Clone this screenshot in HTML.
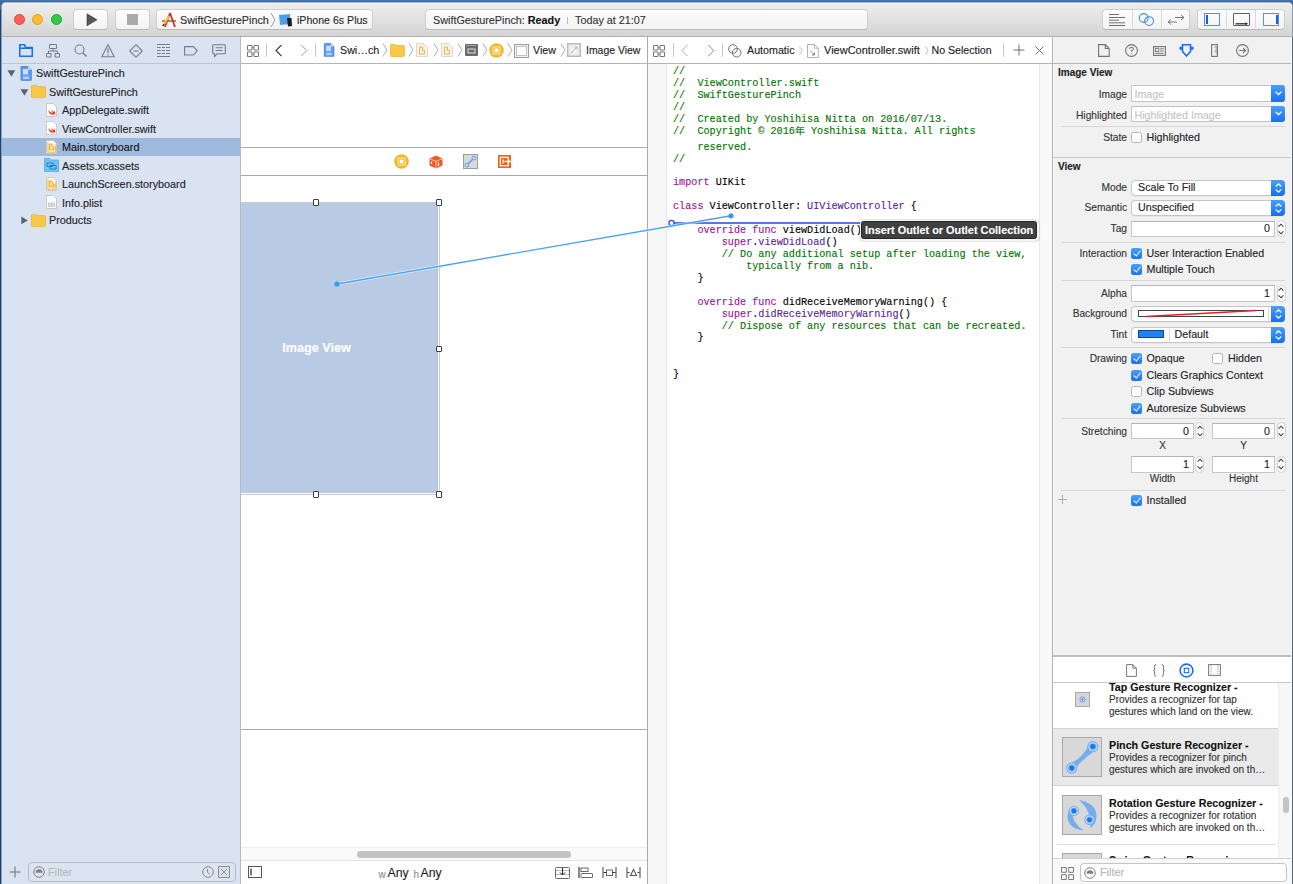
<!DOCTYPE html>
<html><head><meta charset="utf-8">
<style>
*{box-sizing:border-box;margin:0;padding:0}
html,body{width:1293px;height:884px;overflow:hidden;background:#15457f;font-family:"Liberation Sans",sans-serif;font-size:11px;color:#222;position:relative}
.a{position:absolute}
svg{position:absolute;overflow:visible}
#desk{position:absolute;left:0;top:0;width:1293px;height:10px;background:linear-gradient(#4b79af,#3f6aa0 1.5px,#3f6aa0 2px)}
#win{position:absolute;left:1px;top:2px;width:1292px;height:882px;background:#fff;border:1px solid #8e9bb0;border-top-color:#aebbcc;border-bottom:0;border-radius:5px 5px 0 0}
#tb{position:absolute;left:2px;top:3px;width:1290px;height:34px;background:linear-gradient(#eeeeee,#d4d4d4);border-bottom:1px solid #b0b0b0;border-radius:4px 4px 0 0;box-shadow:inset 0 1px 0 #f4f4f3}
.tl{position:absolute;top:14.2px;width:11px;height:11px;border-radius:50%}
.btn{position:absolute;top:9px;height:21px;background:linear-gradient(#fefefe,#f3f3f3);border:1px solid #cfcfcf;border-bottom-color:#b8b8b8;border-radius:4px}
.sep{position:absolute;top:0;width:1px;height:18px;background:#dadada}
.t{position:absolute;white-space:nowrap;line-height:13px}
#nav{position:absolute;left:2px;top:37px;width:239px;height:847px;background:#d9e3f2;border-right:1px solid #b6bac2}
#canvas{position:absolute;left:241px;top:37px;width:407px;height:847px;background:#fff;border-right:1px solid #a9a9a9}
#code{position:absolute;left:648px;top:37px;width:405px;height:847px;background:#fff;border-right:1px solid #b0b0b0}
#insp{position:absolute;left:1053px;top:37px;width:239px;height:847px;background:#f1f1f1;border-left:1px solid #f8f8f8}
.mono{font-family:"Liberation Mono",monospace;font-size:10.17px;line-height:12px}

.cb{position:absolute;width:11px;height:11px;border:1px solid #b3b3b3;border-radius:2.5px;background:#fff}
.cbc{position:absolute;width:11px;height:11px;border-radius:2.5px;background:linear-gradient(#4aa1fb,#1b70f4)}
.cbc:after{content:"";position:absolute;left:3.5px;top:1px;width:3px;height:6.2px;border:solid #fff;border-width:0 1.8px 1.8px 0;transform:rotate(38deg)}
.pop{position:absolute;left:1131px;width:154px;height:16px;background:#fff;border:1px solid #c6c6c6;border-radius:4px;box-shadow:0 0.5px 0.5px rgba(0,0,0,.08)}
.pb{position:absolute;right:-1px;top:-1px;width:14px;height:16px;background:linear-gradient(#49a1fb,#176cf3);border-radius:0 4px 4px 0}
.pb svg{left:3.5px;top:3px}
.tf{position:absolute;left:1131px;height:16.5px;background:#fff;border:1px solid #c6c6c6;border-top-color:#b4b4b4}
.st{position:absolute;width:9px;height:17px;border:1px solid #cfcfcf;border-radius:4.5px;background:#fff}
.lbl{position:absolute;left:1053px;width:74px;text-align:right;font-size:10.2px;color:#333;white-space:nowrap;line-height:13px}
.val{position:absolute;font-size:10.7px;color:#222;white-space:nowrap;line-height:13px}
.hd{position:absolute;width:6.5px;height:6.5px;background:#fff;border:1px solid #3c3c3c;border-radius:1px}
.t,.val,.lbl{-webkit-text-stroke:0.12px currentColor}
.mono{-webkit-text-stroke:0.12px currentColor}
.hr{position:absolute;left:1061px;width:224px;height:1px;background:#d6d6d6}
</style></head><body>
<div id="desk"></div>
<div id="win"></div>

<div id="tb"></div>
<div class="tl" style="left:13.7px;background:#fd5f57;border:1px solid #e0443e"></div>
<div class="tl" style="left:32.1px;background:#fdbc2e;border:1px solid #dea123"></div>
<div class="tl" style="left:50.5px;background:#34c84a;border:1px solid #1aab29"></div>
<div class="btn" style="left:73px;width:35px"></div>
<svg style="left:85.5px;top:13px" width="12" height="14"><path d="M1 0.8 L11 6.8 L1 12.8Z" fill="#575757" stroke="#333" stroke-width="0.6"/></svg>
<div class="btn" style="left:114.5px;width:35px"></div>
<div class="a" style="left:127px;top:14px;width:11px;height:11px;background:#aaaaaa"></div>
<div class="btn" style="left:156px;width:217px"></div>
<svg style="left:160px;top:12px" width="18" height="16" viewBox="0 0 18 16">
 <path d="M2 9 L16 9" stroke="#a26a3a" stroke-width="1.6"/>
 <path d="M10 1 L5 15" stroke="#c8303a" stroke-width="1.8"/>
 <path d="M10 1 L15 15" stroke="#c8303a" stroke-width="1.8"/>
 <path d="M3 14 L9 4" stroke="#e7c63a" stroke-width="2.2"/>
 <path d="M3 14 L4 12" stroke="#333" stroke-width="1.5"/>
</svg>
<div class="t" style="left:180px;top:13.5px;font-size:10.8px;color:#2a2a2a">SwiftGesturePinch</div>
<svg style="left:270px;top:12px" width="6" height="16"><path d="M1 1 L5 8 L1 15" fill="none" stroke="#9a9a9a" stroke-width="1"/></svg>
<svg style="left:278px;top:13px" width="15" height="14" viewBox="0 0 15 14">
 <path d="M1 2 L12 1 L12 11 L2 12 Z" fill="#4aa0ee"/>
 <path d="M9 5 L13.5 5 L14 13 L10 13.5 Z" fill="#1a1a1a"/>
</svg>
<div class="t" style="left:297px;top:13.5px;font-size:10.6px;color:#2a2a2a">iPhone 6s Plus</div>
<div class="btn" style="left:425px;width:443px;background:linear-gradient(#fbfbfb,#f4f4f4)"></div>
<div class="t" style="left:433px;top:13.5px;font-size:10.8px;color:#333">SwiftGesturePinch: <b style="color:#111">Ready</b></div>
<div class="a" style="left:567px;top:16.5px;width:1px;height:7.5px;background:#bcbcbc"></div>
<div class="t" style="left:575px;top:13.5px;font-size:10.8px;color:#333">Today at 21:07</div>
<div class="btn" style="left:1102px;width:88px"><div class="sep" style="left:29px"></div><div class="sep" style="left:58px"></div></div>
<svg style="left:1108px;top:14px" width="18" height="12">
 <path d="M1 0.5H11M1 3.5H17M1 6.2H11M1 8.8H17M1 11.5H17" stroke="#6e6e6e" stroke-width="1"/>
</svg>
<svg style="left:1138px;top:12px" width="16" height="16">
 <circle cx="5.7" cy="6" r="4.4" fill="none" stroke="#3f8cf4" stroke-width="1.1"/>
 <circle cx="11.1" cy="9.1" r="4.4" fill="none" stroke="#3f8cf4" stroke-width="1.1"/>
</svg>
<svg style="left:1166px;top:13px" width="20" height="14">
 <path d="M9 4.5H18M15 2L18 4.5L15 7" fill="none" stroke="#737373" stroke-width="1"/>
 <path d="M2 9H11M5 6.5L2 9L5 11.5" fill="none" stroke="#737373" stroke-width="1"/>
</svg>
<div class="btn" style="left:1197px;width:88px"><div class="sep" style="left:28px"></div><div class="sep" style="left:57px"></div></div>
<div class="a" style="left:1204px;top:13px;width:16px;height:13px;border:1px solid #4d90f7"></div>
<div class="a" style="left:1206px;top:15px;width:1.5px;height:9px;background:#0f62f0"></div>
<div class="a" style="left:1233px;top:13px;width:17px;height:13px;border:1px solid #5f5f5f;border-radius:1px"></div>
<svg style="left:1235px;top:21.5px" width="14" height="4"><path d="M0.5 1.8H11.5" stroke="#1e1e1e" stroke-width="1.2"/><path d="M10.5 0.3L13 1.8L10.5 3.3Z" fill="#1e1e1e"/></svg>
<div class="a" style="left:1263px;top:13px;width:16px;height:13px;border:1px solid #4d90f7"></div>
<div class="a" style="left:1276px;top:15px;width:1.5px;height:9px;background:#0f62f0"></div>
<div id="nav"></div>
<div class="a" style="left:2px;top:63px;width:238px;height:1px;background:#bfc5ce"></div>
<!-- nav tab icons -->
<svg style="left:19px;top:44px" width="14" height="13"><path d="M0.75 2.5V12.25H13.25V3.5H6.5L5.5 0.75H0.75Z M0.75 4.25H13.25" fill="none" stroke="#1a6ef5" stroke-width="1.5"/></svg>
<svg style="left:46px;top:44px" width="14" height="14"><path d="M3.5 0.5H10.5V4.5H3.5Z M7 4.5V7 M2.5 7H11.5V9 M2.5 7V9 M11.5 7V9 M0.5 9.5H5V13H0.5Z M9 9.5H13.5V13H9Z" fill="none" stroke="#787d84" stroke-width="1"/></svg>
<svg style="left:74px;top:44px" width="14" height="14"><circle cx="5.5" cy="5.5" r="4.5" fill="none" stroke="#787d84" stroke-width="1.1"/><path d="M8.8 8.8L12.5 12.5" stroke="#787d84" stroke-width="1.4"/></svg>
<svg style="left:101px;top:44px" width="14" height="14"><path d="M7 0.8L13.2 12.8H0.8Z" fill="none" stroke="#787d84" stroke-width="1.1"/><path d="M7 4.5V9M7 10.2V11.4" stroke="#787d84" stroke-width="1.2"/></svg>
<svg style="left:129px;top:44px" width="14" height="14"><path d="M7 0.7L13.3 7L7 13.3L0.7 7Z M4.3 7H9.7" fill="none" stroke="#787d84" stroke-width="1.1"/></svg>
<svg style="left:157px;top:44px" width="13" height="13"><path d="M0 0.5H13M0 3.5H13M0 6.5H13M0 9.5H13M0 12.5H13" stroke="#787d84" stroke-width="1"/><path d="M4.2 3V10M8.5 3V10" stroke="#dbe4f1" stroke-width="1"/></svg>
<svg style="left:184px;top:46px" width="14" height="10"><path d="M0.6 0.6H9.5L13.2 4.8L9.5 9H0.6Z" fill="none" stroke="#787d84" stroke-width="1.1"/></svg>
<svg style="left:212px;top:44px" width="14" height="14"><path d="M1.5 0.7H12.5Q13.3 0.7 13.3 1.5V9Q13.3 9.8 12.5 9.8H5L2.5 12.5V9.8H1.5Q0.7 9.8 0.7 9V1.5Q0.7 0.7 1.5 0.7Z M3.5 3.7H10.5M3.5 6.5H10.5" fill="none" stroke="#787d84" stroke-width="1.1"/></svg>

<!-- tree -->
<div class="a" style="left:2px;top:138px;width:238px;height:18px;background:#9fb8dd"></div>
<svg style="left:7px;top:70px" width="9" height="7"><path d="M0.5 0.3H8.3L4.4 6.8Z" fill="#5b6370"/></svg>
<svg style="left:20px;top:66px" width="12" height="15" viewBox="0 0 12 15"><path d="M1 0.5H8L11.3 3.8V14.3H1Z" fill="#5a9cf3" stroke="#3b7de0" stroke-width="0.8"/><path d="M8 0.5V3.8H11.3" fill="#cfe2fb"/><path d="M3 3H8V8.5H3Z" fill="#eaf3ff" opacity=".8"/><path d="M3 11H9M3 12.5H9" stroke="#eaf3ff" stroke-width="0.8"/></svg>
<div class="t" style="left:36px;top:67px;font-size:10.8px">SwiftGesturePinch</div>

<svg style="left:20px;top:88.5px" width="9" height="7"><path d="M0.5 0.3H8.3L4.4 6.8Z" fill="#5b6370"/></svg>
<svg style="left:31px;top:85px" width="15" height="13"><path d="M0.5 1.2Q0.5 0.4 1.3 0.4H5.5L6.5 1.6H13.7Q14.5 1.6 14.5 2.4V11.8Q14.5 12.6 13.7 12.6H1.3Q0.5 12.6 0.5 11.8Z" fill="#f8c947" stroke="#e7b22c" stroke-width="0.7"/></svg>
<div class="t" style="left:49px;top:85.5px;font-size:10.8px">SwiftGesturePinch</div>
<svg style="left:46px;top:102.5px" width="11" height="14"><path d="M0.5 0.5H7.3L10.5 3.7V13.5H0.5Z" fill="#fff" stroke="#bfbfbf" stroke-width="0.8"/><path d="M2.2 7.2Q4.5 10 7 10.2Q6 8.5 4.5 6.8Q7 8.5 8.3 8.9Q8.4 7.5 7.6 6.4Q9.3 7.8 9.2 10.2Q9.5 11 9 12Q8.6 11.2 7.6 11.3Q5.8 12.3 3.8 10.8Q2.6 9.5 2.2 7.2Z" fill="#f23b22"/></svg>
<div class="t" style="left:62px;top:104px;font-size:10.8px">AppDelegate.swift</div>
<svg style="left:46px;top:121px" width="11" height="14"><path d="M0.5 0.5H7.3L10.5 3.7V13.5H0.5Z" fill="#fff" stroke="#bfbfbf" stroke-width="0.8"/><path d="M2.2 7.2Q4.5 10 7 10.2Q6 8.5 4.5 6.8Q7 8.5 8.3 8.9Q8.4 7.5 7.6 6.4Q9.3 7.8 9.2 10.2Q9.5 11 9 12Q8.6 11.2 7.6 11.3Q5.8 12.3 3.8 10.8Q2.6 9.5 2.2 7.2Z" fill="#f23b22"/></svg>
<div class="t" style="left:62px;top:122.5px;font-size:10.8px">ViewController.swift</div>
<svg style="left:46px;top:139.5px" width="11" height="14"><path d="M0.5 0.5H7.3L10.5 3.7V13.5H0.5Z" fill="#fffaf0" stroke="#c9c3b8" stroke-width="0.8"/><path d="M2 2V12.3H9.2V4.5" fill="none" stroke="#f0b93e" stroke-width="1.1"/><path d="M3.5 4H6.2V7.2H8V10H3.5Z" fill="#fbe3a6" stroke="#e6a12a" stroke-width="0.9"/></svg>
<div class="t" style="left:62px;top:141px;font-size:10.8px;color:#111">Main.storyboard</div>
<svg style="left:44px;top:158px" width="15" height="14"><path d="M0.5 0.5H5.5L6.5 2H14.5V13.5H0.5Z" fill="#6cc3f2" stroke="#49a8df" stroke-width="0.7"/><path d="M3 5H9V8.5H3Z M6 7.5H12V11H6Z" fill="none" stroke="#1f78c2" stroke-width="0.9"/></svg>
<div class="t" style="left:62px;top:159.5px;font-size:10.8px">Assets.xcassets</div>
<svg style="left:46px;top:176.5px" width="11" height="14"><path d="M0.5 0.5H7.3L10.5 3.7V13.5H0.5Z" fill="#fffaf0" stroke="#c9c3b8" stroke-width="0.8"/><path d="M2 2V12.3H9.2V4.5" fill="none" stroke="#f0b93e" stroke-width="1.1"/><path d="M3.5 4H6.2V7.2H8V10H3.5Z" fill="#fbe3a6" stroke="#e6a12a" stroke-width="0.9"/></svg>
<div class="t" style="left:62px;top:178px;font-size:10.8px">LaunchScreen.storyboard</div>
<svg style="left:46px;top:195px" width="11" height="14"><path d="M0.5 0.5H7.3L10.5 3.7V13.5H0.5Z" fill="#fafafa" stroke="#bfbfbf" stroke-width="0.8"/><path d="M2.5 8H8.5V11.5H2.5Z M2.5 9.7H8.5 M5.5 8V11.5" fill="none" stroke="#b5b5b5" stroke-width="0.7"/></svg>
<div class="t" style="left:62px;top:196.5px;font-size:10.8px">Info.plist</div>
<svg style="left:21px;top:216px" width="7" height="9"><path d="M0.3 0.5V8.3L6.8 4.4Z" fill="#5b6370"/></svg>
<svg style="left:31px;top:213.5px" width="15" height="13"><path d="M0.5 1.2Q0.5 0.4 1.3 0.4H5.5L6.5 1.6H13.7Q14.5 1.6 14.5 2.4V11.8Q14.5 12.6 13.7 12.6H1.3Q0.5 12.6 0.5 11.8Z" fill="#f8c947" stroke="#e7b22c" stroke-width="0.7"/></svg>
<div class="t" style="left:49px;top:214px;font-size:10.8px">Products</div>

<!-- nav filter bar -->
<svg style="left:9px;top:866px" width="12" height="12"><path d="M6 0.5V11.5M0.5 6H11.5" stroke="#707070" stroke-width="1"/></svg>
<div class="a" style="left:28px;top:862px;width:208px;height:20px;border:1px solid #b8bcc2;border-radius:4px;background:#dbe4f1"></div>
<svg style="left:33px;top:866px" width="12" height="12"><circle cx="6" cy="6" r="5.3" fill="none" stroke="#808080" stroke-width="1"/><path d="M2.5 6.8A3.5 3.5 0 0 1 9.5 6.8Z" fill="#808080"/></svg>
<div class="t" style="left:48px;top:865.5px;font-size:10.8px;color:#b8b8b8">Filter</div>
<svg style="left:202px;top:866px" width="12" height="12"><circle cx="6" cy="6" r="5.3" fill="none" stroke="#8a8a8a" stroke-width="1"/><path d="M5.5 2.8V6.3L7.8 8.3" fill="none" stroke="#8a8a8a" stroke-width="1"/></svg>
<svg style="left:218px;top:866px" width="12" height="12"><path d="M0.5 0.5H11.5V11.5H0.5Z M3 3L9 9M9 3L3 9" fill="none" stroke="#8a8a8a" stroke-width="1"/></svg>
<div id="canvas"></div>
<div class="a" style="left:241px;top:63px;width:406px;height:1px;background:#b5b5b5"></div>
<!-- jump bar -->
<svg style="left:247px;top:44.5px" width="12" height="12"><path d="M0.5 0.5H5V5H0.5Z M7 0.5H11.5V5H7Z M0.5 7H5V11.5H0.5Z M7 7H11.5V11.5H7Z" fill="none" stroke="#777" stroke-width="1"/><path d="M5 2.7H7M5 9.2H7" stroke="#777" stroke-width="0.8"/></svg>
<div class="a" style="left:266px;top:43px;width:1px;height:14px;background:#c8c8c8"></div>
<svg style="left:275px;top:44px" width="8" height="13"><path d="M6.5 0.8L1 6.5L6.5 12.2" fill="none" stroke="#333" stroke-width="1.1"/></svg>
<svg style="left:300px;top:44px" width="8" height="13"><path d="M1.2 0.8L6.7 6.5L1.2 12.2" fill="none" stroke="#a0a0a0" stroke-width="1"/></svg>
<div class="a" style="left:315px;top:43px;width:1px;height:14px;background:#c8c8c8"></div>
<svg style="left:323px;top:43px" width="12" height="14" viewBox="0 0 12 15"><path d="M1 0.5H8L11.3 3.8V14.3H1Z" fill="#5a9cf3" stroke="#3b7de0" stroke-width="0.8"/><path d="M8 0.5V3.8H11.3" fill="#cfe2fb"/><path d="M3 3H8V8.5H3Z" fill="#eaf3ff" opacity=".8"/><path d="M3 11H9M3 12.5H9" stroke="#eaf3ff" stroke-width="0.8"/></svg>
<div class="t" style="left:340px;top:43.5px;font-size:10.7px;color:#222">Swi…ch</div>
<svg style="left:382px;top:43px" width="6" height="14"><path d="M1 0.5L5 7L1 13.5" fill="none" stroke="#a5a5a5" stroke-width="0.9"/></svg>
<svg style="left:389.5px;top:44px" width="15" height="13"><path d="M0.5 1.2Q0.5 0.4 1.3 0.4H5.5L6.5 1.6H13.7Q14.5 1.6 14.5 2.4V11.8Q14.5 12.6 13.7 12.6H1.3Q0.5 12.6 0.5 11.8Z" fill="#f8c947" stroke="#e7b22c" stroke-width="0.7"/></svg>
<svg style="left:407.5px;top:43px" width="6" height="14"><path d="M1 0.5L5 7L1 13.5" fill="none" stroke="#a5a5a5" stroke-width="0.9"/></svg>
<svg style="left:416px;top:43px" width="12" height="14"><path d="M0.5 0.5H8L11.5 4V13.5H0.5Z" fill="#f8f3ea" stroke="#d8d0c2" stroke-width="0.8"/><path d="M3.5 4H6.5V7.5H8.5V11H3.5Z" fill="none" stroke="#eab04c" stroke-width="1"/></svg>
<svg style="left:432.5px;top:43px" width="6" height="14"><path d="M1 0.5L5 7L1 13.5" fill="none" stroke="#a5a5a5" stroke-width="0.9"/></svg>
<svg style="left:441px;top:43px" width="12" height="14"><path d="M0.5 0.5H8L11.5 4V13.5H0.5Z" fill="#f8f3ea" stroke="#d8d0c2" stroke-width="0.8"/><path d="M3.5 4H6.5V7.5H8.5V11H3.5Z" fill="none" stroke="#eab04c" stroke-width="1"/></svg>
<svg style="left:457px;top:43px" width="6" height="14"><path d="M1 0.5L5 7L1 13.5" fill="none" stroke="#a5a5a5" stroke-width="0.9"/></svg>
<svg style="left:465px;top:44px" width="13" height="12"><rect x="0" y="0" width="13" height="12" rx="1" fill="#6b6b6b"/><path d="M1.5 1.5H11.5" stroke="#ddd" stroke-width="1" stroke-dasharray="1 1"/><rect x="3" y="5" width="7" height="4" fill="none" stroke="#e0e0e0" stroke-width="1"/></svg>
<svg style="left:481.5px;top:43px" width="6" height="14"><path d="M1 0.5L5 7L1 13.5" fill="none" stroke="#a5a5a5" stroke-width="0.9"/></svg>
<svg style="left:489px;top:43px" width="15" height="15"><circle cx="7.5" cy="7.5" r="7.3" fill="#f1b82d"/><rect x="4" y="4" width="7" height="7" fill="none" stroke="#fbe3a0" stroke-width="1.2"/><rect x="5.6" y="5.6" width="3.8" height="3.8" fill="#fff"/></svg>
<svg style="left:507px;top:43px" width="6" height="14"><path d="M1 0.5L5 7L1 13.5" fill="none" stroke="#a5a5a5" stroke-width="0.9"/></svg>
<svg style="left:514px;top:43.5px" width="15" height="14"><rect x="0.5" y="0.5" width="14" height="13" fill="#efefef" stroke="#9d9d9d" stroke-width="1"/><rect x="2.5" y="2.5" width="10" height="9" fill="#fff" stroke="#b5b5b5" stroke-width="0.8"/></svg>
<div class="t" style="left:533px;top:43.5px;font-size:10.7px;color:#222">View</div>
<svg style="left:560px;top:43px" width="6" height="14"><path d="M1 0.5L5 7L1 13.5" fill="none" stroke="#a5a5a5" stroke-width="0.9"/></svg>
<svg style="left:567px;top:43px" width="14" height="14"><rect x="0.75" y="0.75" width="12.5" height="12.5" fill="#f4f4f4" stroke="#b9b9b9" stroke-width="1.5"/><path d="M4 10L9.5 4.5M7.5 4H10V6.5" fill="none" stroke="#a0a0a0" stroke-width="0.8"/><path d="M3 3H11V11H3Z" fill="none" stroke="#dedede" stroke-width="0.6"/></svg>
<div class="t" style="left:586px;top:43.5px;font-size:10.45px;color:#222">Image View</div>

<!-- scene dock -->
<div class="a" style="left:241px;top:147px;width:406px;height:1px;background:#a9a9a9"></div>
<div class="a" style="left:241px;top:175px;width:406px;height:1px;background:#a9a9a9"></div>
<svg style="left:394px;top:154px" width="15" height="15"><circle cx="7.5" cy="7.5" r="7.3" fill="#f1b82d"/><rect x="4" y="4" width="7" height="7" fill="none" stroke="#fbe3a0" stroke-width="1.2"/><rect x="5.6" y="5.6" width="3.8" height="3.8" fill="#fff"/></svg>
<svg style="left:428.5px;top:154.5px" width="14" height="14"><path d="M7 0.5L13.5 3.5V10.5L7 13.5L0.5 10.5V3.5Z" fill="#f05a28"/><path d="M0.5 3.5L7 6.5L13.5 3.5M7 6.5V13.5" fill="none" stroke="#ffd7c4" stroke-width="0.9"/><path d="M2.5 6.5V9M9.5 7.5V11" stroke="#fff" stroke-width="1.2"/></svg>
<svg style="left:462.5px;top:154px" width="15" height="15"><rect x="0.5" y="0.5" width="14" height="14" fill="#d9d9d9" stroke="#9e9e9e" stroke-width="1"/><circle cx="4" cy="11" r="2" fill="none" stroke="#5c9ef0" stroke-width="1"/><circle cx="11" cy="4" r="2" fill="none" stroke="#5c9ef0" stroke-width="1"/><path d="M5.3 9.7L9.7 5.3" stroke="#5c9ef0" stroke-width="1.4"/></svg>
<svg style="left:497.5px;top:155px" width="13" height="13"><rect x="0" y="0" width="13" height="13" fill="#f2611f"/><rect x="2.3" y="2.3" width="8" height="8.4" fill="none" stroke="#fff" stroke-width="1.3"/><path d="M5 4.5V8.5M6.5 6.5H12.5" stroke="#fff" stroke-width="1.3"/><path d="M10.5 4.5L12.5 6.5L10.5 8.5" fill="#fff"/></svg>

<!-- image view -->
<div class="a" style="left:241px;top:202px;width:199px;height:293px;border:1px solid #cbcbcb;border-left:0;background:#fff"></div>
<div class="a" style="left:241px;top:203px;width:197px;height:290px;background:#b9cbe4;border-right:1px solid #adc3e3"></div>
<div class="t" style="left:241px;top:341.5px;width:151px;text-align:center;font-size:12.6px;font-weight:bold;color:#fff">Image View</div>
<div class="hd" style="left:312.8px;top:199.3px"></div>
<div class="hd" style="left:435.8px;top:199.3px"></div>
<div class="hd" style="left:435.8px;top:345.8px"></div>
<div class="hd" style="left:312.8px;top:491.3px"></div>
<div class="hd" style="left:435.8px;top:491.3px"></div>

<div class="a" style="left:241px;top:729px;width:406px;height:1px;background:#a9a9a9"></div>
<!-- scrollbar -->
<div class="a" style="left:241px;top:847px;width:406px;height:14px;background:#fafafa;border-top:1px solid #ececec"></div>
<div class="a" style="left:357px;top:851px;width:214px;height:7px;border-radius:4px;background:#c2c2c2"></div>
<div class="a" style="left:241px;top:860px;width:406px;height:1px;background:#e2e2e2"></div>
<div class="a" style="left:241px;top:861px;width:406px;height:23px;background:#fff"></div>
<svg style="left:248px;top:866px" width="14" height="12"><rect x="0.5" y="0.5" width="13" height="11" fill="none" stroke="#555" stroke-width="1"/><path d="M3 2.5V9.5" stroke="#222" stroke-width="1.2"/></svg>
<div class="t" style="left:378.5px;top:868px;font-size:10px;color:#8e8e8e">w</div>
<div class="t" style="left:387.5px;top:866.5px;font-size:12.3px;color:#1e1e1e">Any</div>
<div class="t" style="left:413.5px;top:868px;font-size:10px;color:#8e8e8e">h</div>
<div class="t" style="left:420.5px;top:866.5px;font-size:12.3px;color:#1e1e1e">Any</div>
<svg style="left:554.5px;top:866.5px" width="15" height="12"><rect x="0.5" y="0.5" width="14" height="11" rx="1" fill="none" stroke="#6a6a6a" stroke-width="1"/><path d="M0.5 3.5H14.5M0.5 7.5H14.5" stroke="#6a6a6a" stroke-width="0.8" stroke-dasharray="1.2 0.8"/><path d="M7.5 1V7.5M5 5.5L7.5 8L10 5.5" fill="none" stroke="#222" stroke-width="1"/></svg>
<svg style="left:578px;top:867px" width="15" height="11"><path d="M1 0V11" stroke="#8a8a8a" stroke-width="2"/><rect x="3" y="1" width="7" height="3.5" fill="none" stroke="#6a6a6a" stroke-width="1"/><rect x="3" y="6.5" width="11.5" height="4" rx="0.5" fill="none" stroke="#6a6a6a" stroke-width="1"/></svg>
<svg style="left:602px;top:867px" width="15" height="11"><path d="M1 0V11M14 0V11" stroke="#8a8a8a" stroke-width="1.6"/><rect x="4.5" y="3" width="6" height="5.5" fill="none" stroke="#6a6a6a" stroke-width="1"/><path d="M1.5 5.5H4.5M10.5 5.5H13.5" stroke="#222" stroke-width="0.9"/></svg>
<svg style="left:626px;top:867px" width="15" height="11"><path d="M1 0V11M14 0V11" stroke="#8a8a8a" stroke-width="1.6"/><path d="M7.5 2.5L10.5 8.5H4.5Z" fill="none" stroke="#555" stroke-width="1.1"/><path d="M1.5 5.5H3.5M11.5 5.5H13.5" stroke="#222" stroke-width="0.9"/></svg>
<div id="code"></div>
<div class="a" style="left:648px;top:63px;width:404px;height:1px;background:#b5b5b5"></div>
<div class="a" style="left:648px;top:64px;width:19px;height:820px;background:#f6f6f6;border-right:1px solid #e9e9e9"></div>
<div class="a" style="left:1039px;top:64px;width:13px;height:820px;background:#f9f9f9;border-left:1px solid #e8e8e8"></div>
<!-- jump bar -->
<svg style="left:653px;top:44.5px" width="12" height="12"><path d="M0.5 0.5H5V5H0.5Z M7 0.5H11.5V5H7Z M0.5 7H5V11.5H0.5Z M7 7H11.5V11.5H7Z" fill="none" stroke="#777" stroke-width="1"/><path d="M5 2.7H7M5 9.2H7" stroke="#777" stroke-width="0.8"/></svg>
<div class="a" style="left:673px;top:43px;width:1px;height:14px;background:#c8c8c8"></div>
<svg style="left:681px;top:44px" width="8" height="13"><path d="M6.5 0.8L1 6.5L6.5 12.2" fill="none" stroke="#a8a8a8" stroke-width="1"/></svg>
<svg style="left:707px;top:44px" width="8" height="13"><path d="M1.2 0.8L6.7 6.5L1.2 12.2" fill="none" stroke="#8a8a8a" stroke-width="1"/></svg>
<div class="a" style="left:721.5px;top:43px;width:1px;height:14px;background:#c8c8c8"></div>
<svg style="left:728px;top:43.5px" width="14" height="14"><circle cx="5" cy="5" r="4.3" fill="none" stroke="#707070" stroke-width="1"/><circle cx="8.7" cy="8.7" r="4.3" fill="none" stroke="#707070" stroke-width="1"/></svg>
<div class="t" style="left:747px;top:43.5px;font-size:10.7px;color:#222">Automatic</div>
<svg style="left:799px;top:46px" width="4" height="9"><path d="M0.5 0.5L3.2 4.5L0.5 8.5" fill="none" stroke="#aaa" stroke-width="0.8"/></svg>
<svg style="left:807px;top:43.5px" width="12" height="14"><path d="M0.5 0.5H7.5L11.3 4.3V13.5H0.5Z" fill="#fff" stroke="#a9a9a9" stroke-width="0.9"/><path d="M7.5 0.5V4.3H11.3" fill="none" stroke="#a9a9a9" stroke-width="0.8"/><path d="M3.5 7L7.5 11M7.5 8.5V11H5" fill="none" stroke="#777" stroke-width="0.9"/></svg>
<div class="t" style="left:824px;top:43.5px;font-size:11px;color:#222">ViewController.swift</div>
<svg style="left:924.5px;top:46px" width="4" height="9"><path d="M0.5 0.5L3.2 4.5L0.5 8.5" fill="none" stroke="#aaa" stroke-width="0.8"/></svg>
<div class="t" style="left:931.5px;top:43.5px;font-size:10.6px;color:#222">No Selection</div>
<div class="a" style="left:1003px;top:43px;width:1px;height:14px;background:#c8c8c8"></div>
<svg style="left:1013px;top:44px" width="12" height="12"><path d="M6 0.5V11.5M0.5 6H11.5" stroke="#6d6d6d" stroke-width="1"/></svg>
<svg style="left:1034.5px;top:45.5px" width="9" height="9"><path d="M0.5 0.5L8.5 8.5M8.5 0.5L0.5 8.5" stroke="#6d6d6d" stroke-width="1"/></svg>
<!-- code -->
<div class="mono" style="position:absolute;left:673px;top:0;white-space:pre;color:#000"><div class="a" style="top:65.5px"><span style="color:#007400">//</span></div>
<div class="a" style="top:77.5px"><span style="color:#007400">//  ViewController.swift</span></div>
<div class="a" style="top:89.5px"><span style="color:#007400">//  SwiftGesturePinch</span></div>
<div class="a" style="top:101.5px"><span style="color:#007400">//</span></div>
<div class="a" style="top:113.5px"><span style="color:#007400">//  Created by Yoshihisa Nitta on 2016/07/13.</span></div>
<div class="a" style="top:125.5px"><span style="color:#007400">//  Copyright © 2016年 Yoshihisa Nitta. All rights</span></div>
<div class="a" style="top:141.5px"><span style="color:#007400">    reserved.</span></div>
<div class="a" style="top:153.5px"><span style="color:#007400">//</span></div>
<div class="a" style="top:177.0px"><span style="color:#aa0d91">import</span> UIKit</div>
<div class="a" style="top:200.5px"><span style="color:#aa0d91">class</span> ViewController: <span style="color:#5c2699">UIViewController</span> {</div>
<div class="a" style="top:225.0px">    <span style="color:#aa0d91">override func</span> viewDidLoad() {</div>
<div class="a" style="top:237.0px">        <span style="color:#aa0d91">super</span>.<span style="color:#5c2699">viewDidLoad</span>()</div>
<div class="a" style="top:249.0px"><span style="color:#007400">        // Do any additional setup after loading the view,</span></div>
<div class="a" style="top:261.0px"><span style="color:#007400">            typically from a nib.</span></div>
<div class="a" style="top:272.5px">    }</div>
<div class="a" style="top:296.5px">    <span style="color:#aa0d91">override func</span> didReceiveMemoryWarning() {</div>
<div class="a" style="top:308.5px">        <span style="color:#aa0d91">super</span>.<span style="color:#5c2699">didReceiveMemoryWarning</span>()</div>
<div class="a" style="top:320.5px"><span style="color:#007400">        // Dispose of any resources that can be recreated.</span></div>
<div class="a" style="top:332.0px">    }</div>
<div class="a" style="top:368.5px">}</div>
</div>
<!-- connection -->
<svg style="left:0;top:0" width="1293" height="884">
 <path d="M671.5 223H861" stroke="#1e4ed8" stroke-width="1.6"/>
 <circle cx="671.5" cy="223" r="2.6" fill="#fff" stroke="#1e4ed8" stroke-width="1.3"/>
 <path d="M337 284L731 215.8" stroke="#ffffff" stroke-width="3" opacity="0.6"/>
 <path d="M337 284L731 215.8" stroke="#4aa2f7" stroke-width="1.4"/>
 <circle cx="337" cy="284" r="2.6" fill="#3a98f5"/>
 <circle cx="731" cy="215.8" r="2.6" fill="#3a98f5"/>
</svg>
<div class="a" style="left:859.5px;top:219.5px;width:179px;height:21px;border-radius:4px;background:#f4f4f4;box-shadow:0 0 1.5px rgba(0,0,0,.45)"></div>
<div class="a" style="left:861px;top:221px;width:176px;height:18px;border-radius:2.5px;background:#404040;border:1px solid #262626"></div>
<div class="t" style="left:865px;top:224px;font-size:10.9px;font-weight:bold;color:#fff">Insert Outlet or Outlet Collection</div>
<div id="insp"></div>
<div class="a" style="left:1291px;top:37px;width:1px;height:847px;background:#f8f8f6"></div>
<div class="a" style="left:1292px;top:37px;width:1px;height:847px;background:#56637d"></div>
<div class="a" style="left:1053px;top:63px;width:238px;height:1px;background:#b5b5b5"></div>
<!-- tabs -->
<svg style="left:1098px;top:44px" width="12" height="13"><path d="M0.6 0.6H7.3L11.2 4.5V12.4H0.6Z M7.3 0.6V4.5H11.2" fill="none" stroke="#737373" stroke-width="1.1"/></svg>
<svg style="left:1124.5px;top:44px" width="13" height="13"><circle cx="6.5" cy="6.5" r="5.9" fill="none" stroke="#737373" stroke-width="1.1"/><path d="M4.6 5Q4.6 3.2 6.5 3.2Q8.4 3.2 8.4 4.9Q8.4 6 6.5 6.8V7.8" fill="none" stroke="#737373" stroke-width="1.1"/><circle cx="6.5" cy="9.6" r="0.7" fill="#737373"/></svg>
<svg style="left:1152.5px;top:45.5px" width="13" height="10"><rect x="0.6" y="0.6" width="11.8" height="8.8" fill="none" stroke="#737373" stroke-width="1.1"/><rect x="2.5" y="2.3" width="3.3" height="3.3" fill="none" stroke="#737373" stroke-width="0.9"/><path d="M7 2.8H10.8M7 5H10.8M2.3 7.4H10.8" stroke="#737373" stroke-width="0.9"/></svg>
<svg style="left:1179px;top:43.5px" width="15" height="13"><path d="M3.5 0.8H11.5V7.5L7.5 12L3.5 7.5Z" fill="none" stroke="#1a6ef5" stroke-width="1.6"/><path d="M0.5 4.3H3.5M11.5 4.3H14.5" stroke="#1a6ef5" stroke-width="3"/></svg>
<svg style="left:1210.5px;top:44px" width="7" height="13"><rect x="0.6" y="0.6" width="5.8" height="11.8" fill="none" stroke="#737373" stroke-width="1.1"/><path d="M3.5 3H6M4.5 5H6M3.5 7H6M4.5 9H6" stroke="#737373" stroke-width="0.8"/></svg>
<svg style="left:1235.5px;top:44px" width="13" height="13"><circle cx="6.5" cy="6.5" r="5.9" fill="none" stroke="#737373" stroke-width="1.1"/><path d="M3.2 6.5H9.6M7 3.9L9.6 6.5L7 9.1" fill="none" stroke="#737373" stroke-width="1.1"/></svg>

<!-- section Image View -->
<div class="t" style="left:1058px;top:66px;font-size:10px;font-weight:bold;color:#222">Image View</div>
<div class="t" style="left:1053px;top:88px;width:74px;text-align:right;font-size:10.2px;color:#333">Image</div>
<div class="a" style="left:1131px;top:85px;width:154px;height:16.5px;background:#fff;border:1px solid #c3c3c3;border-right:0;border-radius:2px 3px 3px 2px"></div>
<div class="a" style="left:1271px;top:85px;width:14px;height:16.5px;background:linear-gradient(#48a0fb,#1a6ef4);border-radius:0 3px 3px 0"></div>
<svg style="left:1274.5px;top:90.5px" width="7" height="5"><path d="M0.7 0.7L3.5 3.6L6.3 0.7" fill="none" stroke="#fff" stroke-width="1.3"/></svg>
<div class="t" style="left:1134.5px;top:88px;font-size:10.7px;color:#c4c4c4">Image</div>
<div class="t" style="left:1053px;top:108.5px;width:74px;text-align:right;font-size:10.2px;color:#333">Highlighted</div>
<div class="a" style="left:1131px;top:105.5px;width:154px;height:16.5px;background:#fff;border:1px solid #c3c3c3;border-right:0;border-radius:2px 3px 3px 2px"></div>
<div class="a" style="left:1271px;top:105.5px;width:14px;height:16.5px;background:linear-gradient(#48a0fb,#1a6ef4);border-radius:0 3px 3px 0"></div>
<svg style="left:1274.5px;top:111px" width="7" height="5"><path d="M0.7 0.7L3.5 3.6L6.3 0.7" fill="none" stroke="#fff" stroke-width="1.3"/></svg>
<div class="t" style="left:1134.5px;top:108.5px;font-size:10.7px;color:#c4c4c4">Highlighted Image</div>
<div class="a" style="left:1061px;top:126px;width:224px;height:1px;background:#d6d6d6"></div>
<div class="t" style="left:1053px;top:130.5px;width:74px;text-align:right;font-size:10.2px;color:#333">State</div>
<div class="cb" style="left:1131px;top:131.5px"></div>
<div class="t" style="left:1146.5px;top:130.5px;font-size:10.7px;color:#222">Highlighted</div>
<div class="a" style="left:1053px;top:157px;width:238px;height:1px;background:#c8c8c8"></div>

<!-- section View -->
<div class="t" style="left:1058px;top:160px;font-size:10px;font-weight:bold;color:#222">View</div>
<div class="lbl" style="top:180.5px">Mode</div>
<div class="pop" style="top:179.5px"><div class="pb"><svg width="7" height="10"><path d="M0.8 3.5L3.5 0.8L6.2 3.5M0.8 6.5L3.5 9.2L6.2 6.5" fill="none" stroke="#fff" stroke-width="1.2"/></svg></div></div>
<div class="val" style="left:1138px;top:180.5px">Scale To Fill</div>
<div class="lbl" style="top:201px">Semantic</div>
<div class="pop" style="top:200px"><div class="pb"><svg width="7" height="10"><path d="M0.8 3.5L3.5 0.8L6.2 3.5M0.8 6.5L3.5 9.2L6.2 6.5" fill="none" stroke="#fff" stroke-width="1.2"/></svg></div></div>
<div class="val" style="left:1138px;top:201px">Unspecified</div>
<div class="lbl" style="top:221.5px">Tag</div>
<div class="tf" style="top:220.5px;width:144px"></div>
<div class="val" style="left:1131px;width:139px;text-align:right;top:221.5px">0</div>
<div class="st" style="left:1276.5px;top:220px"></div>
<svg style="left:1278px;top:222.5px" width="6" height="12"><path d="M0.6 3.6L3 1.2L5.4 3.6M0.6 8.4L3 10.8L5.4 8.4" fill="none" stroke="#3c3c3c" stroke-width="1.1"/></svg>
<div class="hr" style="top:242px"></div>
<div class="lbl" style="top:246.5px">Interaction</div>
<div class="cbc" style="left:1131px;top:247.5px"></div>
<div class="val" style="left:1146.5px;top:246.5px">User Interaction Enabled</div>
<div class="cbc" style="left:1131px;top:264px"></div>
<div class="val" style="left:1146.5px;top:263px">Multiple Touch</div>
<div class="hr" style="top:280px"></div>
<div class="lbl" style="top:286.5px">Alpha</div>
<div class="tf" style="top:285px;width:144px"></div>
<div class="val" style="left:1131px;width:139px;text-align:right;top:286.5px">1</div>
<div class="st" style="left:1276.5px;top:284.5px"></div>
<svg style="left:1278px;top:287px" width="6" height="12"><path d="M0.6 3.6L3 1.2L5.4 3.6M0.6 8.4L3 10.8L5.4 8.4" fill="none" stroke="#3c3c3c" stroke-width="1.1"/></svg>
<div class="lbl" style="top:307px">Background</div>
<div class="pop" style="top:306px"><div class="pb"><svg width="7" height="10"><path d="M0.8 3.5L3.5 0.8L6.2 3.5M0.8 6.5L3.5 9.2L6.2 6.5" fill="none" stroke="#fff" stroke-width="1.2"/></svg></div></div>
<div class="a" style="left:1268px;top:307px;width:1px;height:14px;background:#dcdcdc"></div>
<svg style="left:1138px;top:310px" width="126" height="7"><rect x="0.5" y="0.5" width="125" height="6" fill="#fff" stroke="#444" stroke-width="1"/><path d="M8 6.5L118 0.5" stroke="#e2202a" stroke-width="1.3"/></svg>
<div class="lbl" style="top:327.5px">Tint</div>
<div class="pop" style="top:326.5px"><div class="pb"><svg width="7" height="10"><path d="M0.8 3.5L3.5 0.8L6.2 3.5M0.8 6.5L3.5 9.2L6.2 6.5" fill="none" stroke="#fff" stroke-width="1.2"/></svg></div></div>
<div class="a" style="left:1169px;top:327.5px;width:1px;height:14px;background:#dcdcdc"></div>
<div class="a" style="left:1138px;top:330px;width:26px;height:7.5px;background:#1e82f0;border:1px solid #14448a"></div>
<div class="val" style="left:1174.5px;top:327.5px">Default</div>
<div class="hr" style="top:347px"></div>
<div class="lbl" style="top:352px">Drawing</div>
<div class="cbc" style="left:1131px;top:353px"></div>
<div class="val" style="left:1146.5px;top:352px">Opaque</div>
<div class="cb" style="left:1212px;top:353px"></div>
<div class="val" style="left:1228px;top:352px">Hidden</div>
<div class="cbc" style="left:1131px;top:369.5px"></div>
<div class="val" style="left:1146.5px;top:368.5px">Clears Graphics Context</div>
<div class="cb" style="left:1131px;top:386px"></div>
<div class="val" style="left:1146.5px;top:385px">Clip Subviews</div>
<div class="cbc" style="left:1131px;top:402.5px"></div>
<div class="val" style="left:1146.5px;top:401.5px">Autoresize Subviews</div>
<div class="hr" style="top:418px"></div>
<div class="lbl" style="top:425px">Stretching</div>
<div class="tf" style="top:422.5px;width:63px"></div>
<div class="val" style="left:1131px;width:58px;text-align:right;top:425px">0</div>
<div class="st" style="left:1195px;top:422px"></div>
<svg style="left:1196.5px;top:424.5px" width="6" height="12"><path d="M0.6 3.6L3 1.2L5.4 3.6M0.6 8.4L3 10.8L5.4 8.4" fill="none" stroke="#3c3c3c" stroke-width="1.1"/></svg>
<div class="tf" style="left:1212px;top:422.5px;width:63px"></div>
<div class="val" style="left:1212px;width:58px;text-align:right;top:425px">0</div>
<div class="st" style="left:1276.5px;top:422px"></div>
<svg style="left:1278px;top:424.5px" width="6" height="12"><path d="M0.6 3.6L3 1.2L5.4 3.6M0.6 8.4L3 10.8L5.4 8.4" fill="none" stroke="#3c3c3c" stroke-width="1.1"/></svg>
<div class="val" style="left:1131px;width:63px;text-align:center;top:438.5px;font-size:10px;color:#333">X</div>
<div class="val" style="left:1212px;width:63px;text-align:center;top:438.5px;font-size:10px;color:#333">Y</div>
<div class="tf" style="top:456px;width:63px"></div>
<div class="val" style="left:1131px;width:58px;text-align:right;top:458px">1</div>
<div class="st" style="left:1195px;top:455.5px"></div>
<svg style="left:1196.5px;top:458px" width="6" height="12"><path d="M0.6 3.6L3 1.2L5.4 3.6M0.6 8.4L3 10.8L5.4 8.4" fill="none" stroke="#3c3c3c" stroke-width="1.1"/></svg>
<div class="tf" style="left:1212px;top:456px;width:63px"></div>
<div class="val" style="left:1212px;width:58px;text-align:right;top:458px">1</div>
<div class="st" style="left:1276.5px;top:455.5px"></div>
<svg style="left:1278px;top:458px" width="6" height="12"><path d="M0.6 3.6L3 1.2L5.4 3.6M0.6 8.4L3 10.8L5.4 8.4" fill="none" stroke="#3c3c3c" stroke-width="1.1"/></svg>
<div class="val" style="left:1131px;width:63px;text-align:center;top:471.5px;font-size:10px;color:#333">Width</div>
<div class="val" style="left:1212px;width:63px;text-align:center;top:471.5px;font-size:10px;color:#333">Height</div>
<div class="hr" style="top:489.5px"></div>
<svg style="left:1058px;top:495px" width="9" height="9"><path d="M4.5 0V9M0 4.5H9" stroke="#a5a5a5" stroke-width="0.9"/></svg>
<div class="cbc" style="left:1131px;top:494.5px"></div>
<div class="val" style="left:1146.5px;top:493.5px">Installed</div>
<!-- library -->
<div class="a" style="left:1053px;top:655px;width:238px;height:1.5px;background:#bdbdbd"></div>
<div class="a" style="left:1053px;top:656.5px;width:238px;height:26px;background:#fff;border-bottom:1px solid #c9c9c9"></div>
<svg style="left:1126px;top:663.5px" width="11" height="13"><path d="M0.6 0.6H6.8L10.4 4.2V12.4H0.6Z M6.8 0.6V4.2H10.4" fill="none" stroke="#777" stroke-width="1"/></svg>
<svg style="left:1153px;top:663.5px" width="12" height="13"><path d="M3.2 0.6Q1.6 0.6 1.6 2.2V5Q1.6 6.5 0.4 6.5Q1.6 6.5 1.6 8V10.8Q1.6 12.4 3.2 12.4M8.8 0.6Q10.4 0.6 10.4 2.2V5Q10.4 6.5 11.6 6.5Q10.4 6.5 10.4 8V10.8Q10.4 12.4 8.8 12.4" fill="none" stroke="#777" stroke-width="1"/></svg>
<svg style="left:1179px;top:662.5px" width="15" height="15"><circle cx="7.5" cy="7.5" r="6.4" fill="none" stroke="#1a6ef5" stroke-width="1.6"/><rect x="5.3" y="5.3" width="4.4" height="4.4" fill="none" stroke="#1a6ef5" stroke-width="1.1"/></svg>
<svg style="left:1207.5px;top:664px" width="13" height="12"><rect x="0.6" y="0.6" width="11.8" height="10.8" fill="none" stroke="#777" stroke-width="1"/><path d="M3 1V11M10 1V11" stroke="#777" stroke-width="0.8" stroke-dasharray="1 1"/></svg>

<div class="a" style="left:1053px;top:683px;width:225px;height:175px;background:#fff;overflow:hidden">
  <div class="a" style="left:21.5px;top:9px;width:15px;height:14.5px;background:#d6d6d6;border:1px solid #a9a9a9"></div>
  <svg style="left:25.5px;top:12.5px" width="7" height="7"><circle cx="3.5" cy="3.5" r="2.6" fill="none" stroke="#5c9ef0" stroke-width="0.9"/><circle cx="3.5" cy="3.5" r="1.1" fill="#3a88ee"/></svg>
  <div class="t" style="left:56px;top:-2px;font-size:10.7px;font-weight:bold;color:#111">Tap Gesture Recognizer -</div>
  <div class="t" style="left:56px;top:10px;font-size:10px;color:#333">Provides a recognizer for tap</div>
  <div class="t" style="left:56px;top:22px;font-size:10px;color:#333">gestures which land on the view.</div>
  <div class="a" style="left:0;top:44.5px;width:225px;height:58px;background:#e9e9e9;border-top:1px solid #d3d3d3;border-bottom:1px solid #d3d3d3"></div>
  <div class="a" style="left:8.5px;top:53.5px;width:40.5px;height:40px;background:#d8d8d8;border:1px solid #a9a9a9"></div>
  <svg style="left:9.5px;top:54.5px" width="39" height="38"><path d="M26 5.5Q23 14 16 20Q11 24 6 26L11 33Q14 28 18 24Q24 18 33 12Z" fill="#74aef0"/><circle cx="29.8" cy="8.6" r="5.6" fill="#74aef0"/><circle cx="29.8" cy="8.6" r="4" fill="none" stroke="#d4e6fb" stroke-width="0.9"/><circle cx="29.8" cy="8.6" r="2.5" fill="#1a73f0"/><circle cx="8.7" cy="30" r="5.6" fill="#74aef0"/><circle cx="8.7" cy="30" r="4" fill="none" stroke="#d4e6fb" stroke-width="0.9"/><circle cx="8.7" cy="30" r="2.5" fill="#1a73f0"/></svg>
  <div class="t" style="left:56px;top:56px;font-size:10.7px;font-weight:bold;color:#111">Pinch Gesture Recognizer -</div>
  <div class="t" style="left:56px;top:68px;font-size:10px;color:#333">Provides a recognizer for pinch</div>
  <div class="t" style="left:56px;top:80px;font-size:10px;color:#333">gestures which are invoked on th…</div>
  <div class="a" style="left:8.5px;top:111.5px;width:40.5px;height:40px;background:#d8d8d8;border:1px solid #a9a9a9"></div>
  <svg style="left:9.5px;top:112.5px" width="39" height="38"><path d="M16 4Q33 7 33.5 20Q33.5 28 27 32Q28.5 24 25 16Q22 9 16 4Z" fill="#74aef0"/><path d="M21 34.5Q5.5 33 4.5 21Q4.5 14 9 11Q8.5 20 12 26Q15.5 31.5 21 34.5Z" fill="#74aef0"/><circle cx="10.9" cy="14.9" r="5.2" fill="#74aef0"/><circle cx="10.9" cy="14.9" r="3.8" fill="none" stroke="#d4e6fb" stroke-width="0.9"/><circle cx="10.9" cy="14.9" r="2.4" fill="#1a73f0"/><circle cx="26.5" cy="23.8" r="5.2" fill="#74aef0"/><circle cx="26.5" cy="23.8" r="3.8" fill="none" stroke="#d4e6fb" stroke-width="0.9"/><circle cx="26.5" cy="23.8" r="2.4" fill="#1a73f0"/></svg>
  <div class="t" style="left:56px;top:114px;font-size:10.7px;font-weight:bold;color:#111">Rotation Gesture Recognizer -</div>
  <div class="t" style="left:56px;top:126px;font-size:10px;color:#333">Provides a recognizer for rotation</div>
  <div class="t" style="left:56px;top:138px;font-size:10px;color:#333">gestures which are invoked on th…</div>
  <div class="a" style="left:4px;top:160.5px;width:218px;height:1px;background:#dcdcdc"></div>
  <div class="a" style="left:8.5px;top:169.5px;width:40.5px;height:40px;background:#d8d8d8;border:1px solid #a9a9a9"></div>
  <div class="t" style="left:56px;top:171px;font-size:10.7px;font-weight:bold;color:#111">Swipe Gesture Recognizer -</div>
</div>
<div class="a" style="left:1278px;top:683px;width:13px;height:175px;background:#f7f7f7;border-left:1px solid #ebebeb"></div>
<div class="a" style="left:1282.5px;top:797px;width:6px;height:16px;border-radius:3px;background:#c3c3c3"></div>
<div class="a" style="left:1053px;top:858px;width:238px;height:26px;background:#f9f9f9;border-top:1px solid #d0d0d0"></div>
<svg style="left:1060.5px;top:866.5px" width="13" height="13"><path d="M0.5 0.5H5.3V5.3H0.5Z M7.7 0.5H12.5V5.3H7.7Z M0.5 7.7H5.3V12.5H0.5Z M7.7 7.7H12.5V12.5H7.7Z" fill="none" stroke="#7a7a7a" stroke-width="1"/></svg>
<div class="a" style="left:1080px;top:863px;width:207px;height:19px;border:1px solid #c4c4c4;border-radius:4px;background:#fff"></div>
<svg style="left:1083.5px;top:866.5px" width="12" height="12"><circle cx="6" cy="6" r="5.3" fill="none" stroke="#808080" stroke-width="1"/><path d="M2.5 6.8A3.5 3.5 0 0 1 9.5 6.8Z" fill="#808080"/></svg>
<div class="t" style="left:1100px;top:866px;font-size:10.8px;color:#b5b5b5">Filter</div>
</body></html>
